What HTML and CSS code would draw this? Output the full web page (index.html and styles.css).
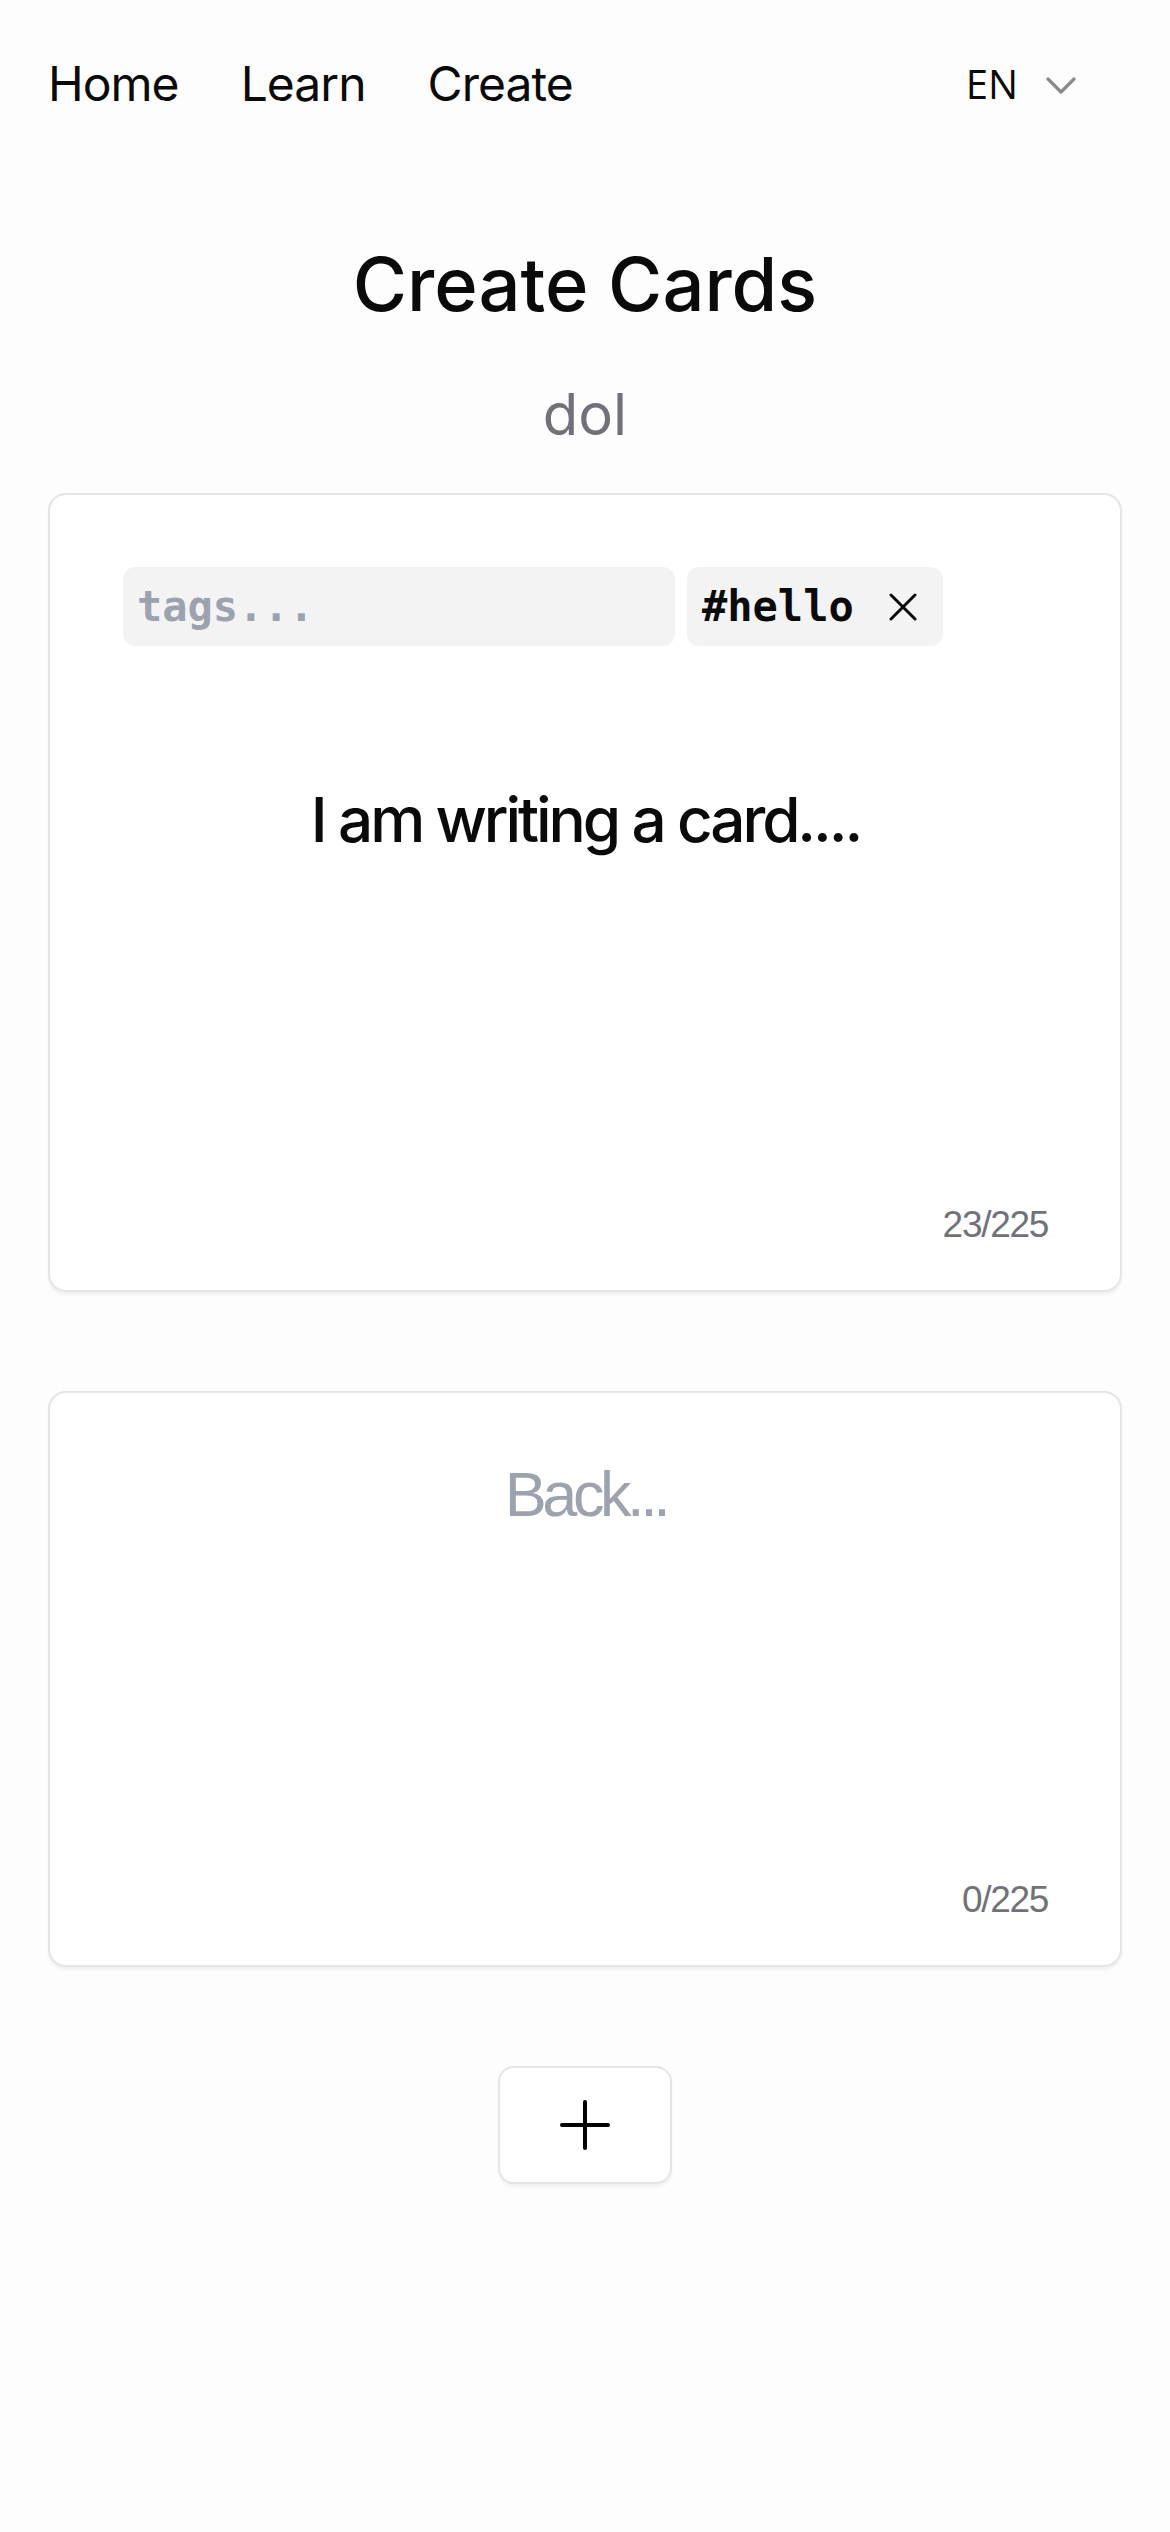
FILE: index.html
```html
<!DOCTYPE html>
<html lang="en">
<head>
<meta charset="utf-8">
<title>Create Cards</title>
<link rel="stylesheet" href="styles.css">
</head>
<body>
<nav class="nav">
  <div class="links">
    <a class="link" href="#">Home</a>
    <a class="link" href="#">Learn</a>
    <a class="link" href="#">Create</a>
  </div>
  <div class="lang">
    <span class="lang-code">EN</span>
    <svg class="chev" width="30" height="18" viewBox="0 0 30 18"><path d="M2 2 L15 15 L28 2" fill="none" stroke="#8a8a8a" stroke-width="3.2" stroke-linecap="round" stroke-linejoin="round"/></svg>
  </div>
</nav>
<main class="page">
  <h1 class="title">Create Cards</h1>
  <div class="deck">dol</div>

  <section class="card card-front">
    <div class="tags">
      <div class="tag-input">tags...</div>
      <div class="chip">
        <span class="chip-text">#hello</span>
        <svg class="chip-x" width="28" height="28" viewBox="0 0 28 28"><path d="M2 2 L26 26 M26 2 L2 26" fill="none" stroke="#0a0a0a" stroke-width="3" stroke-linecap="round"/></svg>
      </div>
    </div>
    <div class="face-text">I am writing a card....</div>
    <div class="counter">23/225</div>
  </section>

  <section class="card card-back">
    <div class="face-text placeholder">Back...</div>
    <div class="counter">0/225</div>
  </section>

  <button class="add" type="button" aria-label="Add card">
    <svg width="52" height="52" viewBox="0 0 52 52"><path d="M26 3 L26 49 M3 26 L49 26" fill="none" stroke="#000" stroke-width="4" stroke-linecap="round"/></svg>
  </button>
</main>
</body>
</html>
```

FILE: styles.css
```css
* { box-sizing: border-box; }

html, body {
  margin: 0;
  padding: 0;
}

body {
  background: #fdfdfd;
  color: #0a0a0a;
  font-family: Inter, "Noto Sans", sans-serif;
  min-height: 2532px;
}

.nav {
  display: flex;
  align-items: center;
  padding: 48px 94px 0 48px;
  height: 120px;
}

.links {
  display: flex;
  gap: 62px;
}

.link {
  color: #0a0a0a;
  text-decoration: none;
  font-size: 48px;
  line-height: 72px;
  font-weight: 400;
  letter-spacing: -0.02em;
}

.lang {
  margin-left: auto;
  display: flex;
  align-items: center;
  gap: 28px;
}

.lang-code {
  font-family: "Open Sans", sans-serif;
  font-size: 40px;
  line-height: 72px;
  color: #0a0a0a;
}

.chev { display: block; margin-top: 4px; }

.page {
  padding: 0 48px 200px;
  display: flex;
  flex-direction: column;
}

.title {
  margin: 120px 0 0;
  text-align: center;
  font-size: 74px;
  line-height: 1.2;
  font-weight: 500;
  letter-spacing: 0;
}

.deck {
  margin-top: 51px;
  text-align: center;
  font-size: 58px;
  line-height: 1.2;
  color: #71717a;
}

.card {
  background: #fff;
  border: 2px solid #e5e5e5;
  border-radius: 18px;
  box-shadow: 0 3px 3px rgba(0, 0, 0, 0.05);
  display: flex;
  flex-direction: column;
  padding: 72px 72px 43px 73px;
}

.card-front {
  margin-top: 44px;
  height: 799px;
}

.card-back {
  margin-top: 99px;
  height: 576px;
  padding-top: 64px;
}

.tags {
  display: flex;
  gap: 12px;
  height: 79px;
}

.tag-input,
.chip {
  background: #f3f3f3;
  border-radius: 12px;
  display: flex;
  align-items: center;
  font-family: "DejaVu Sans Mono", monospace;
  font-weight: 700;
  font-size: 42px;
}

.tag-input {
  width: 552px;
  padding: 0 14px;
  color: #9ca3af;
}

.chip {
  padding: 0 26px 0 15px;
  color: #0a0a0a;
}

.chip-x {
  display: block;
  margin-left: 35px;
}

.face-text {
  text-align: center;
  font-size: 62px;
  line-height: 1.2;
  font-weight: 500;
  letter-spacing: -0.05em;
}

.card-front .face-text {
  margin-top: 137px;
}

.placeholder {
  font-family: "Liberation Sans", Arial, sans-serif;
  font-weight: 400;
  font-size: 63px;
  color: #9ca3af;
  letter-spacing: -0.07em;
}

.counter {
  margin-top: auto;
  text-align: right;
  font-family: "Liberation Sans", Arial, sans-serif;
  font-size: 37px;
  line-height: 1.2;
  color: #71717a;
  letter-spacing: -0.035em;
}

.add {
  margin: 99px auto 0;
  width: 174px;
  height: 118px;
  background: #fff;
  border: 2px solid #e5e5e5;
  border-radius: 16px;
  box-shadow: 0 3px 3px rgba(0, 0, 0, 0.05);
  display: flex;
  align-items: center;
  justify-content: center;
  padding: 0;
}

.add svg { display: block; }
```
